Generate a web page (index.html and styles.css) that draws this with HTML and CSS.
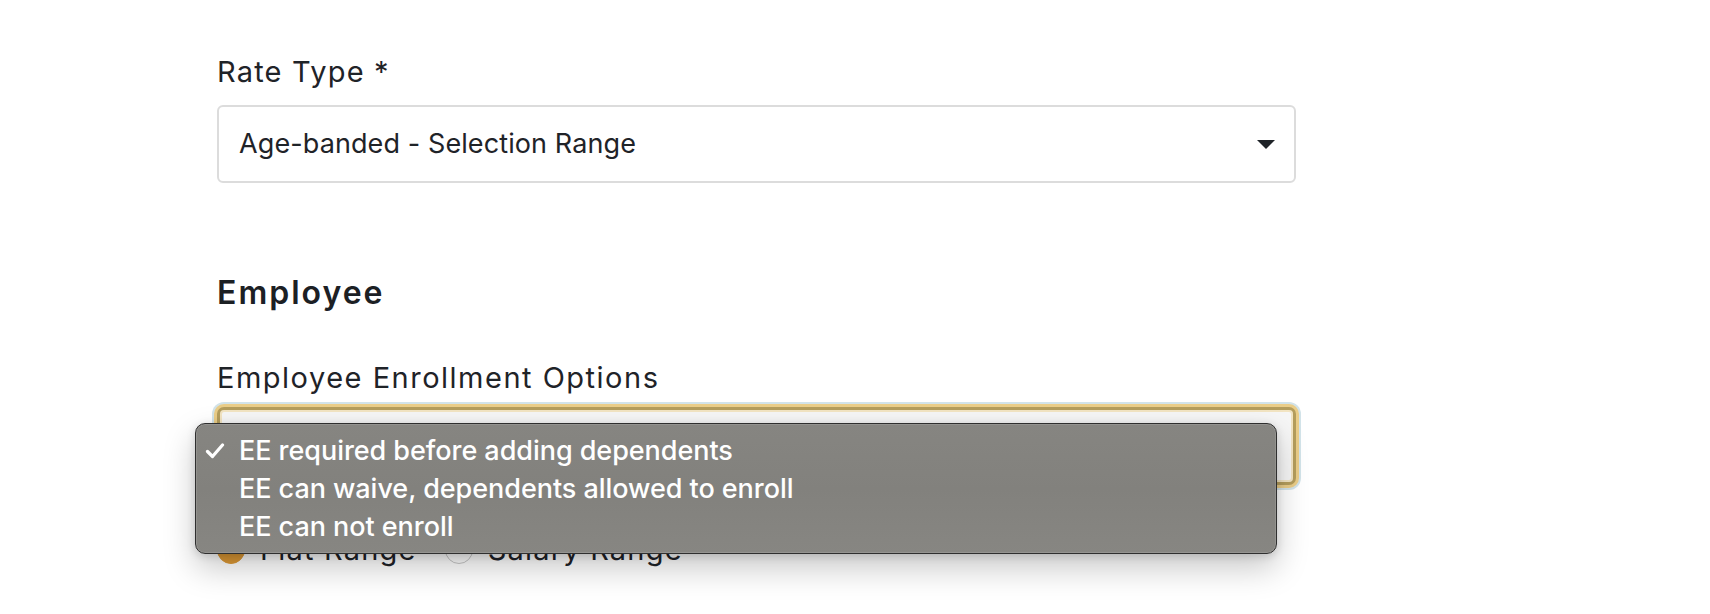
FILE: index.html
```html
<!DOCTYPE html>
<html lang="en">
<head>
<meta charset="utf-8">
<title>Rate Type</title>
<link rel="stylesheet" href="styles.css">
</head>
<body>
<main class="form">
  <div class="field">
    <label class="label">Rate Type *</label>
    <div class="select">
      <span class="select-value">Age-banded - Selection Range</span>
      <svg class="caret" width="18" height="9" viewBox="0 0 18 9"><polygon points="0,0 18,0 9,9" fill="#1f2328"/></svg>
    </div>
  </div>

  <h2 class="section-title">Employee</h2>

  <div class="field field-enroll">
    <label class="label label-wide">Employee Enrollment Options</label>
    <div class="select select-focus"></div>
    <ul class="popup">
      <li class="popup-item is-checked">
        <svg class="check" width="20" height="16" viewBox="0 0 20 16"><path d="M2.5 8.5 L7.5 13.5 L17.5 2" fill="none" stroke="#fff" stroke-width="3.2" stroke-linecap="round" stroke-linejoin="round"/></svg>
        EE required before adding dependents
      </li>
      <li class="popup-item">EE can waive, dependents allowed to enroll</li>
      <li class="popup-item">EE can not enroll</li>
    </ul>
  </div>

  <div class="radios">
    <label class="radio"><span class="radio-dot radio-dot-on"></span>Flat Range</label>
    <label class="radio"><span class="radio-dot"></span>Salary Range</label>
  </div>
</main>
</body>
</html>
```

FILE: styles.css
```css
* { box-sizing: border-box; }

html, body {
  margin: 0;
  padding: 0;
  background: #ffffff;
}

body {
  font-family: Inter, "Liberation Sans", Arial, sans-serif;
  color: #1f2328;
  width: 1710px;
  height: 614px;
  overflow: hidden;
}

.form {
  margin-left: 217px;
  width: 1079px;
  padding-top: 54px;
}

.field {
  display: flex;
  flex-direction: column;
}

.label {
  font-size: 29px;
  line-height: 36px;
  font-weight: 400;
  color: #1f2328;
  letter-spacing: 1.2px;
}

.label-wide {
  letter-spacing: 1.5px;
}

.select {
  margin-top: 15px;
  height: 78px;
  border: 2px solid #dcdcdc;
  border-radius: 6px;
  background: #fff;
  display: flex;
  align-items: center;
  justify-content: space-between;
  padding: 0 19px 0 20px;
}

.select-value {
  font-size: 27px;
  line-height: 36px;
  color: #1f2328;
  letter-spacing: 0.1px;
}

.caret { display: block; }

.section-title {
  margin: 92px 0 0;
  font-size: 32px;
  line-height: 36px;
  font-weight: 600;
  color: #1c2024;
  letter-spacing: 2px;
}

.field-enroll {
  position: relative;
  margin-top: 49px;
}

.select-focus {
  margin-top: 11px;
  background: #f6f6f6;
  border: 3px solid #b49d5c;
  border-radius: 7px;
  box-shadow: inset 0 0 0 2px #f2e4c2, 0 0 0 3px #eacd88, 0 0 0 5px #d2e3e9;
}

.popup {
  position: absolute;
  top: 63px;
  left: -22px;
  width: 1082px;
  margin: 0;
  padding: 8px 0 7px;
  list-style: none;
  background: linear-gradient(180deg, #868581 0%, #82817d 50%, #878682 100%);
  border: 1px solid #2f2f2f;
  border-radius: 10px;
  box-shadow: inset 0 0 0 1px rgba(255,255,255,0.12), 0 14px 32px rgba(0,0,0,0.22), 0 2px 8px rgba(0,0,0,0.15);
  z-index: 5;
}

.popup-item {
  position: relative;
  height: 38px;
  line-height: 38px;
  padding-left: 43px;
  font-size: 27px;
  font-weight: 500;
  color: #ffffff;
  letter-spacing: -0.05px;
}

.check {
  position: absolute;
  left: 9px;
  top: 11px;
}

.radios {
  margin-top: 47px;
  display: flex;
  align-items: center;
  gap: 28px;
}

.radio {
  display: flex;
  align-items: center;
  gap: 15px;
  font-size: 29px;
  line-height: 36px;
  color: #1f2328;
  letter-spacing: 1.2px;
}

.radio-dot {
  width: 28px;
  height: 28px;
  border-radius: 50%;
  border: 1.5px solid #c8c8c8;
  background: #fff;
}

.radio-dot-on {
  background: #de9a36;
  border-color: #de9a36;
}
```
